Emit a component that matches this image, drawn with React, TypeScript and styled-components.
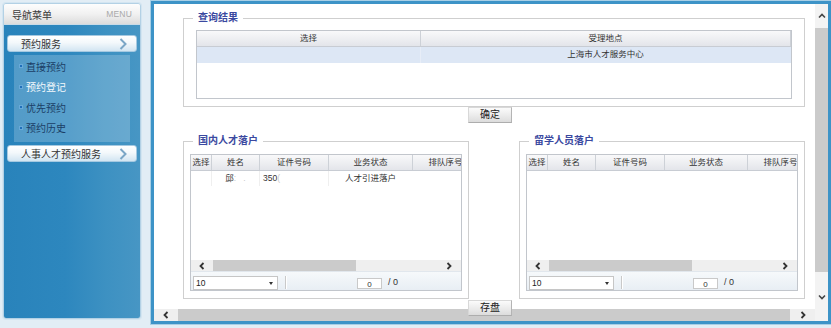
import React from 'react';
import styled, { createGlobalStyle } from 'styled-components';

const GlobalStyle = createGlobalStyle`
  html, body { margin: 0; padding: 0; }
  body {
    background: #e2edf5;
    font-family: "Liberation Sans", "Noto Sans CJK SC", sans-serif;
    width: 831px;
    height: 328px;
    overflow: hidden;
  }
`;

const FONT = `"Liberation Sans", "Noto Sans CJK SC", sans-serif`;

type Dir = 'left' | 'right' | 'up' | 'down';

const Chevron = ({
  dir,
  w = 7,
  h = 9,
  color = '#3a3a3a',
  sw = 1.8,
}: {
  dir: Dir;
  w?: number;
  h?: number;
  color?: string;
  sw?: number;
}) => {
  const pts = {
    left: `${w - 1.5},1 1.5,${h / 2} ${w - 1.5},${h - 1}`,
    right: `1.5,1 ${w - 1.5},${h / 2} 1.5,${h - 1}`,
    up: `1,${h - 1.5} ${w / 2},1.5 ${w - 1},${h - 1.5}`,
    down: `1,1.5 ${w / 2},${h - 1.5} ${w - 1},1.5`,
  }[dir];
  return (
    <svg width={w} height={h} viewBox={`0 0 ${w} ${h}`}>
      <polyline points={pts} fill="none" stroke={color} strokeWidth={sw} />
    </svg>
  );
};

/* ---------- page ---------- */

const Page = styled.div`
  display: flex;
  align-items: flex-start;
  width: 831px;
  height: 328px;
  padding: 1px 0 0 3px;
  box-sizing: border-box;
`;

/* ---------- sidebar ---------- */

const SideBar = styled.nav`
  margin-top: 2px;
  width: 138px;
  height: 316px;
  box-sizing: border-box;
  border: 1px solid #b3d1e5;
  border-radius: 3px;
  box-shadow: 0 0 0 1px #d3e5f1;
  display: flex;
  flex-direction: column;
  overflow: hidden;
`;

const SideHeader = styled.div`
  flex: none;
  height: 20px;
  display: flex;
  align-items: center;
  justify-content: space-between;
  padding: 0 8px;
  background: linear-gradient(#fdfdfd, #f1f1f1 50%, #dcdcdc);
  border-bottom: 1px solid #c9dbe7;
`;

const SideTitle = styled.span`
  font-size: 10px;
  color: #3a3a3a;
`;

const SideMenuTag = styled.span`
  font-size: 8.5px;
  color: #a9a9a9;
  letter-spacing: 0.2px;
`;

const SideBody = styled.div`
  flex: 1;
  padding: 10px 3px 0;
  display: flex;
  flex-direction: column;
  background: linear-gradient(to right, #2983bb 0%, #2d87be 45%, #3d91c2 75%, #4796c4 100%);
`;

const MenuButton = styled.div`
  flex: none;
  height: 17px;
  box-sizing: border-box;
  border: 1px solid #a5c9e1;
  border-radius: 3px;
  background: linear-gradient(#ffffff, #f3f8fb 45%, #d2e5f2);
  display: flex;
  align-items: center;
  justify-content: space-between;
  padding: 0 9px 0 13px;
  font-size: 10px;
  color: #333;
`;

const SubPanel = styled.div`
  margin: 3px 7px;
  height: 87px;
  box-sizing: border-box;
  padding: 1px 0 4px;
  background: rgba(255, 255, 255, 0.2);
  display: flex;
  flex-direction: column;
`;

const SubItem = styled.div<{ $active?: boolean }>`
  height: 20.7px;
  display: flex;
  align-items: center;
  gap: 4px;
  padding-left: 6px;
  font-size: 10px;
  color: ${(p) => (p.$active ? '#f4f9fc' : '#1b3e66')};
`;

const Bullet = styled.span`
  width: 2px;
  height: 2px;
  background: #1f6fba;
  box-shadow: 0 0 0 1px rgba(120, 180, 230, 0.6);
`;

/* ---------- main frame ---------- */

const Frame = styled.main`
  margin-left: 10px;
  width: 680px;
  height: 323px;
  box-sizing: border-box;
  border: 3px solid #3d93c7;
  box-shadow: 0 0 0 1px #a8cfe6;
  background: #fff;
  display: grid;
  grid-template-columns: minmax(0, 1fr) 13px;
  grid-template-rows: minmax(0, 1fr) 12px;
`;

const Content = styled.div`
  min-height: 0;
  padding: 8px 0 0 29px;
  display: flex;
  flex-direction: column;
  align-items: flex-start;
`;

const VScroll = styled.div`
  display: flex;
  flex-direction: column;
  background: #f3f3f3;
`;

const HScroll = styled.div<{ $h: number }>`
  flex: none;
  display: flex;
  height: ${(p) => p.$h}px;
  background: #efefef;
`;

const ScrollArrow = styled.div<{ $size: number; $vertical?: boolean }>`
  flex: none;
  ${(p) => (p.$vertical ? `height: ${p.$size}px;` : `width: ${p.$size}px;`)}
  display: flex;
  align-items: center;
  justify-content: center;
`;

const Thumb = styled.div<{ $size: number; $vertical?: boolean }>`
  flex: none;
  ${(p) => (p.$vertical ? `height: ${p.$size}px;` : `width: ${p.$size}px;`)}
  background: #cbcbcb;
`;

const Track = styled.div`
  flex: 1;
`;

const Corner = styled.div`
  background: #f3f3f3;
`;

/* ---------- fieldsets ---------- */

const Group = styled.fieldset<{ $w: number; $pad: string }>`
  margin: 0;
  width: ${(p) => p.$w}px;
  box-sizing: border-box;
  border: 1px solid #cfcfcf;
  padding: ${(p) => p.$pad};
  min-width: 0;
`;

const GroupTitle = styled.legend<{ $ml: number }>`
  margin-left: ${(p) => p.$ml}px;
  padding: 0 5px;
  font-size: 10px;
  line-height: 12px;
  font-weight: bold;
  color: #3b49a0;
`;

const BottomRow = styled.div`
  margin-top: 12px;
  display: flex;
  gap: 50px;
`;

const ActionButton = styled.button<{ $mt: number }>`
  margin: ${(p) => p.$mt}px 0 0 285px;
  width: 44px;
  height: 16px;
  padding: 0;
  box-sizing: border-box;
  border: 1px solid;
  border-color: #d8d8d8 #b4b4b4 #adadad #d8d8d8;
  background: linear-gradient(#fbfbfb, #e9e9e9 60%, #dcdcdc);
  font: 10px ${FONT};
  line-height: 14px;
  color: #222;
  position: relative;
  z-index: 1;
`;

/* ---------- data grids ---------- */

const DataGrid = styled.div<{ $h: number }>`
  height: ${(p) => p.$h}px;
  box-sizing: border-box;
  border: 1px solid #c2c6cc;
  background: #fff;
  display: flex;
  flex-direction: column;
  overflow: hidden;
`;

const HeadRow = styled.div<{ $cols: string }>`
  flex: none;
  display: grid;
  grid-template-columns: ${(p) => p.$cols};
  height: 16px;
  box-sizing: border-box;
  background: linear-gradient(#f9f9fa, #eeeff2 50%, #e3e5ea);
  border-bottom: 1px solid #c8ccd3;
`;

const HeadCell = styled.div`
  border-right: 1px solid #cdd1d7;
  font-size: 8.5px;
  line-height: 15px;
  color: #333;
  text-align: center;
  white-space: nowrap;
  overflow: hidden;
`;

const BodyRow = styled.div<{ $cols: string; $h: number; $bg?: string }>`
  flex: none;
  display: grid;
  grid-template-columns: ${(p) => p.$cols};
  height: ${(p) => p.$h}px;
  background: ${(p) => p.$bg || '#fff'};
`;

const BodyCell = styled.div<{ $align?: 'left' | 'center'; $line?: string }>`
  border-right: 1px solid ${(p) => p.$line || '#efefef'};
  font-size: 8.5px;
  line-height: 15px;
  color: #333;
  text-align: ${(p) => p.$align || 'center'};
  padding-left: ${(p) => (p.$align === 'left' ? '3px' : '0')};
  white-space: pre;
  overflow: hidden;
`;

const Faint = styled.span`
  color: #c8c8c8;
`;

const Filler = styled.div`
  flex: 1;
`;

const Pager = styled.div`
  flex: none;
  height: 19px;
  box-sizing: border-box;
  display: flex;
  align-items: flex-end;
  padding-left: 2px;
  background: linear-gradient(#f6f9fb, #e8eef4);
  border-top: 1px solid #e1e7ed;
`;

const PageSize = styled.div`
  width: 85px;
  height: 14px;
  box-sizing: border-box;
  border: 1px solid #c6c6c6;
  background: #fff;
  display: flex;
  align-items: center;
  justify-content: space-between;
  padding: 0 4px 0 2px;
  font-size: 8.5px;
  color: #222;
`;

const Caret = styled.span`
  width: 0;
  height: 0;
  border-left: 2.5px solid transparent;
  border-right: 2.5px solid transparent;
  border-top: 3px solid #333;
`;

const PagerSep = styled.span`
  margin: 0 0 1px 7px;
  width: 1px;
  height: 13px;
  background: #c9c9c9;
  box-shadow: 1px 0 0 #fff;
`;

const PageInput = styled.div`
  margin-left: 71px;
  margin-bottom: 1px;
  width: 25px;
  height: 11px;
  box-sizing: border-box;
  border: 1px solid #c9c9c9;
  background: #fff;
  font-size: 8px;
  line-height: 9px;
  padding-top: 1px;
  text-align: center;
  color: #333;
  overflow: hidden;
`;

const PageTotal = styled.span`
  margin: 0 0 3px 6px;
  font-size: 9px;
  color: #333;
`;

/* ---------- parts ---------- */

const HeadersCN = ['选择', '姓名', '证件号码', '业务状态', '排队序号'];

const SettleGrid = ({ cols, row }: { cols: string; row?: boolean }) => (
  <DataGrid $h={137}>
    <HeadRow $cols={cols}>
      {HeadersCN.map((h) => (
        <HeadCell key={h}>{h}</HeadCell>
      ))}
    </HeadRow>
    {row && (
      <BodyRow $cols={cols} $h={15}>
        <BodyCell />
        <BodyCell>
          邱<Faint>:</Faint>
          {'   '}
          <Faint>.</Faint>
        </BodyCell>
        <BodyCell $align="left">
          350<Faint>(</Faint>
        </BodyCell>
        <BodyCell $line="#fff">人才引进落户</BodyCell>
        <BodyCell />
      </BodyRow>
    )}
    <Filler />
    <HScroll $h={11}>
      <ScrollArrow $size={22}>
        <Chevron dir="left" w={6} h={8} color="#333" />
      </ScrollArrow>
      <Thumb $size={143} />
      <Track />
      <ScrollArrow $size={24}>
        <Chevron dir="right" w={6} h={8} color="#333" />
      </ScrollArrow>
    </HScroll>
    <Pager>
      <PageSize>
        10
        <Caret />
      </PageSize>
      <PagerSep />
      <PageInput>0</PageInput>
      <PageTotal>/ 0</PageTotal>
    </Pager>
  </DataGrid>
);

export default function App() {
  return (
    <>
      <GlobalStyle />
      <Page>
        <SideBar>
          <SideHeader>
            <SideTitle>导航菜单</SideTitle>
            <SideMenuTag>MENU</SideMenuTag>
          </SideHeader>
          <SideBody>
            <MenuButton>
              预约服务
              <Chevron dir="right" w={8} h={12} color="#7aa6c6" sw={2} />
            </MenuButton>
            <SubPanel>
              <SubItem>
                <Bullet />
                直接预约
              </SubItem>
              <SubItem $active>
                <Bullet />
                预约登记
              </SubItem>
              <SubItem>
                <Bullet />
                优先预约
              </SubItem>
              <SubItem>
                <Bullet />
                预约历史
              </SubItem>
            </SubPanel>
            <MenuButton>
              人事人才预约服务
              <Chevron dir="right" w={8} h={12} color="#7aa6c6" sw={2} />
            </MenuButton>
          </SideBody>
        </SideBar>

        <Frame>
          <Content>
            <Group $w={622} $pad="6px 12px 7px">
              <GroupTitle $ml={-3}>查询结果</GroupTitle>
              <DataGrid $h={69}>
                <HeadRow $cols="224px 1fr">
                  <HeadCell>选择</HeadCell>
                  <HeadCell>受理地点</HeadCell>
                </HeadRow>
                <BodyRow $cols="224px 1fr" $h={16} $bg="#dde7f5">
                  <BodyCell $line="#e7edf7" />
                  <BodyCell $line="transparent">上海市人才服务中心</BodyCell>
                </BodyRow>
              </DataGrid>
            </Group>
            <ActionButton $mt={0}>确定</ActionButton>

            <BottomRow>
              <Group $w={286} $pad="7px 6px 7px">
                <GroupTitle $ml={3}>国内人才落户</GroupTitle>
                <SettleGrid cols="21px 48px 69px 84px 66px" row />
              </Group>
              <Group $w={286} $pad="7px 6px 7px">
                <GroupTitle $ml={3}>留学人员落户</GroupTitle>
                <SettleGrid cols="21px 48px 69px 83px 66px" />
              </Group>
            </BottomRow>
            <ActionButton $mt={1}>存盘</ActionButton>
          </Content>

          <VScroll>
            <ScrollArrow $size={24} $vertical>
              <Chevron dir="up" w={8} h={6} color="#444" sw={1.6} />
            </ScrollArrow>
            <Thumb $size={244} $vertical />
            <Track />
            <ScrollArrow $size={25} $vertical>
              <Chevron dir="down" w={8} h={6} color="#444" sw={1.6} />
            </ScrollArrow>
          </VScroll>

          <HScroll $h={12}>
            <ScrollArrow $size={24}>
              <Chevron dir="left" w={6} h={8} color="#333" />
            </ScrollArrow>
            <Thumb $size={612} />
            <Track />
            <ScrollArrow $size={25}>
              <Chevron dir="right" w={6} h={8} color="#333" />
            </ScrollArrow>
          </HScroll>
          <Corner />
        </Frame>
      </Page>
    </>
  );
}
